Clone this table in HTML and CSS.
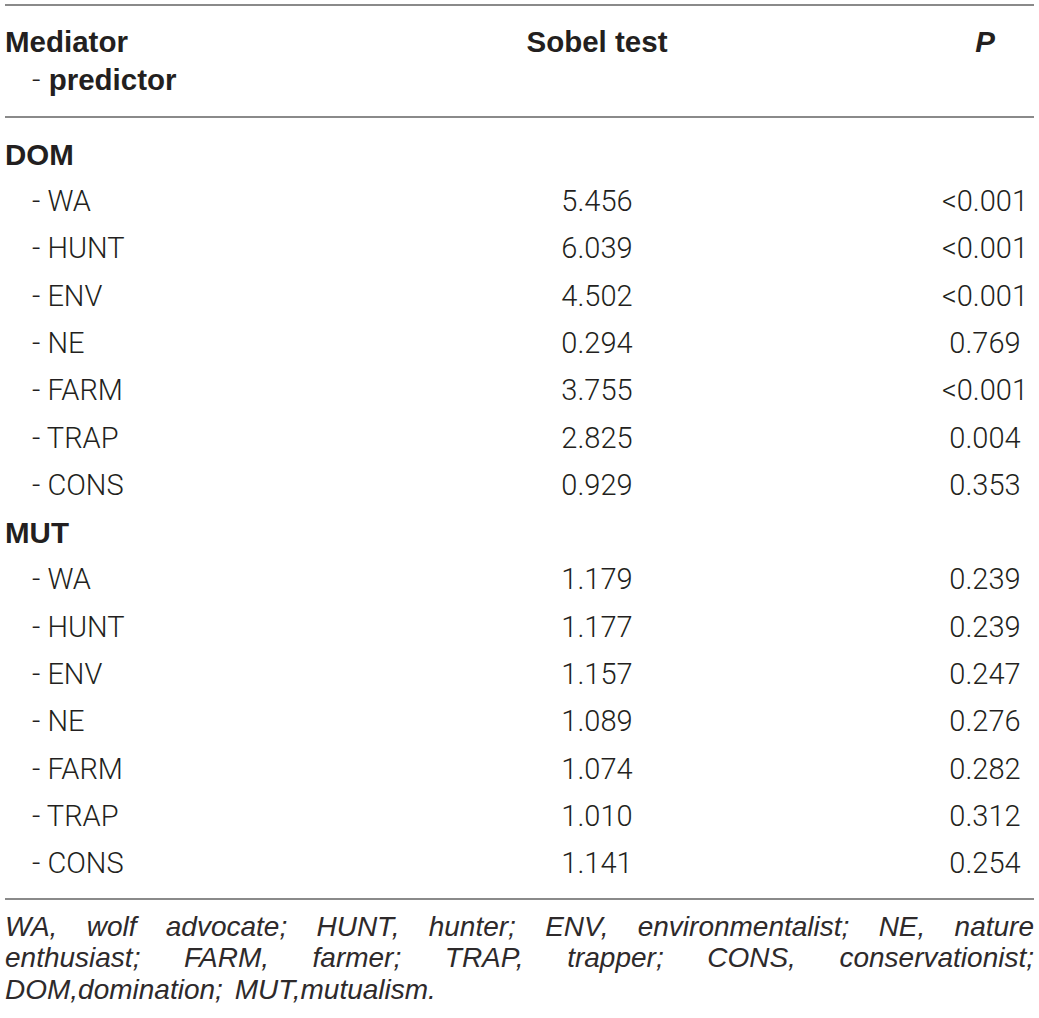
FILE: index.html
```html
<!DOCTYPE html>
<html lang="en">

<head>
    <meta charset="UTF-8">
    <meta name="viewport" content="width=device-width, initial-scale=1.0">
    <title>Sobel test</title>
    <link rel="stylesheet" href="styles.css">
</head>

<body>
    <div class="table-wrap">
        <table class="sobel-table">
            <thead>
                <tr>
                    <th class="col-name">Mediator<br><span class="dash">- </span>predictor</th>
                    <th class="col-test">Sobel test</th>
                    <th class="col-p"><i>P</i></th>
                </tr>
            </thead>
            <tbody>
                <tr class="group first">
                    <td class="col-name">DOM</td>
                    <td class="col-test"></td>
                    <td class="col-p"></td>
                </tr>
                <tr><td class="col-name sub">- WA</td><td class="col-test">5.456</td><td class="col-p">&lt;0.001</td></tr>
                <tr><td class="col-name sub">- HUNT</td><td class="col-test">6.039</td><td class="col-p">&lt;0.001</td></tr>
                <tr><td class="col-name sub">- ENV</td><td class="col-test">4.502</td><td class="col-p">&lt;0.001</td></tr>
                <tr><td class="col-name sub">- NE</td><td class="col-test">0.294</td><td class="col-p">0.769</td></tr>
                <tr><td class="col-name sub">- FARM</td><td class="col-test">3.755</td><td class="col-p">&lt;0.001</td></tr>
                <tr><td class="col-name sub">- TRAP</td><td class="col-test">2.825</td><td class="col-p">0.004</td></tr>
                <tr><td class="col-name sub">- CONS</td><td class="col-test">0.929</td><td class="col-p">0.353</td></tr>
                <tr class="group">
                    <td class="col-name">MUT</td>
                    <td class="col-test"></td>
                    <td class="col-p"></td>
                </tr>
                <tr><td class="col-name sub">- WA</td><td class="col-test">1.179</td><td class="col-p">0.239</td></tr>
                <tr><td class="col-name sub">- HUNT</td><td class="col-test">1.177</td><td class="col-p">0.239</td></tr>
                <tr><td class="col-name sub">- ENV</td><td class="col-test">1.157</td><td class="col-p">0.247</td></tr>
                <tr><td class="col-name sub">- NE</td><td class="col-test">1.089</td><td class="col-p">0.276</td></tr>
                <tr><td class="col-name sub">- FARM</td><td class="col-test">1.074</td><td class="col-p">0.282</td></tr>
                <tr><td class="col-name sub">- TRAP</td><td class="col-test">1.010</td><td class="col-p">0.312</td></tr>
                <tr class="last"><td class="col-name sub">- CONS</td><td class="col-test">1.141</td><td class="col-p">0.254</td></tr>
            </tbody>
        </table>
        <p class="footnote">WA, wolf advocate; HUNT, hunter; ENV, environmentalist; NE, nature enthusiast; FARM, farmer; TRAP, trapper; CONS, conservationist; DOM,domination; MUT,mutualism.</p>
    </div>
</body>

</html>
```

FILE: styles.css
```css
* {
    box-sizing: border-box;
}

body {
    margin: 0;
    background: white;
    color: #231f20;
    font-family: Roboto, "Liberation Sans", sans-serif;
    font-weight: 300;
}

.table-wrap {
    padding: 4px 5px 0;
}

.sobel-table {
    width: 100%;
    border-collapse: collapse;
    font-size: 29px;
}

.sobel-table thead tr {
    border-top: 2px solid #8a8a8a;
    border-bottom: 2px solid #8a8a8a;
}

.sobel-table th {
    font-family: "Liberation Sans", Arial, sans-serif;
    font-size: 29.5px;
    font-weight: bold;
    line-height: 38.4px;
    padding: 17px 0 16px;
    vertical-align: top;
}

.sobel-table th .dash {
    font-family: Roboto, "Liberation Sans", sans-serif;
    font-weight: 300;
    padding-left: 27px;
    padding-right: 1px;
}

.sobel-table td {
    padding: 0;
    height: 47.3px;
    line-height: 47.3px;
}

.col-name {
    width: 507px;
    text-align: left;
}

.col-test {
    width: 170px;
    text-align: center;
}

.col-p {
    text-align: center;
    padding-left: 254px !important;
}

.group .col-name {
    font-family: "Liberation Sans", Arial, sans-serif;
    font-size: 29.5px;
    font-weight: bold;
}

.group.first td {
    padding-top: 13px;
    height: 60px;
}

.sub {
    padding-left: 27px !important;
}

.last td {
    padding-bottom: 10px;
    height: 57px;
    border-bottom: 2px solid #8a8a8a;
}

.footnote {
    margin: 11px 0 0;
    font-family: "Liberation Sans", Arial, sans-serif;
    font-weight: normal;
    font-size: 28px;
    line-height: 31.6px;
    font-style: italic;
    word-spacing: 4px;
    color: #2e2a2b;
    text-align: justify;
}
```
